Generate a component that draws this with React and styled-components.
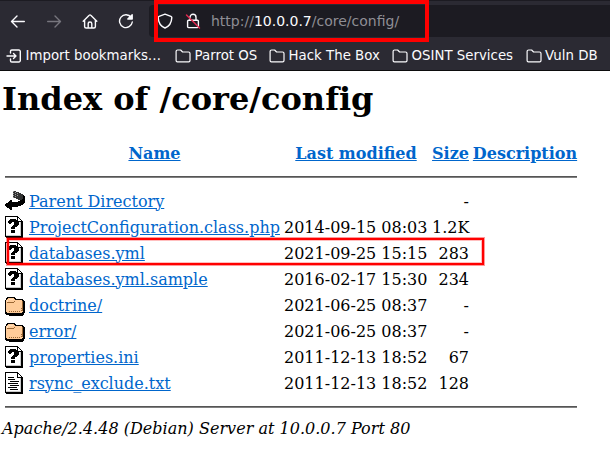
import React from "react";
import styled, { createGlobalStyle } from "styled-components";

const GlobalStyle = createGlobalStyle`
  * { box-sizing: border-box; }
  body { margin: 0; background: #fff; overflow: hidden; }
`;

const Window = styled.div`
  width: 610px;
  height: 467px;
  position: relative;
  overflow: hidden;
`;

const Chrome = styled.header`
  height: 71px;
  background: #2b2a33;
  border-top: 1px solid #1c1b22;
  border-bottom: 1px solid #0c0c0d;
  font-family: "DejaVu Sans", sans-serif;
  color: #fbfbfe;
`;

const NavBar = styled.div`
  display: flex;
  height: 41px;
  padding-top: 4px;
`;

const NavButtons = styled.div`
  display: flex;
  align-items: center;
  width: 149px;
  height: 32px;
  padding-left: 10px;
  gap: 20px;
`;

const Glyph = styled.svg`
  display: block;
  flex: none;
  fill: none;
  stroke: ${(p) => p.$color || "#fbfbfe"};
  stroke-width: ${(p) => p.$weight || 1.4};
  stroke-linecap: round;
  stroke-linejoin: round;
`;

const UrlBar = styled.div`
  display: flex;
  align-items: center;
  flex: 1;
  height: 32px;
  padding-left: 8px;
  gap: 12px;
  background: #1c1b22;
  border-radius: 4px 0 0 4px;
`;

const Url = styled.span`
  font-size: 14px;
  line-height: 20px;
  margin-left: -2px;
  color: #8f8e95;
  white-space: nowrap;
`;

const Host = styled.span`
  color: #fbfbfe;
`;

const BookmarksBar = styled.nav`
  display: flex;
  align-items: center;
  height: 28px;
  padding-left: 6px;
`;

const Bookmark = styled.span`
  display: flex;
  align-items: center;
  flex: none;
  gap: 3.6px;
  width: ${(p) => p.$width}px;
  font-size: 13.33px;
  line-height: 18px;
  white-space: nowrap;
`;

const Page = styled.main`
  padding: 9px 0 0 2px;
  font-family: "DejaVu Serif", serif;
  font-size: 16px;
  line-height: 19px;
  color: #000;
`;

const Title = styled.h1`
  margin: 0;
  font-size: 32px;
  line-height: 38px;
  letter-spacing: 0.01px;
  white-space: nowrap;
`;

const Listing = styled.div`
  width: 572px;
  margin: 22px 0 0 3px;
`;

const Row = styled.div`
  display: grid;
  grid-template-columns: 20px 251px 144px 37px 104px;
  column-gap: 4px;
  align-items: center;
  height: 26px;
  white-space: nowrap;
`;

const HeadRow = styled(Row)`
  height: 27px;
  font-weight: bold;
  justify-items: center;
`;

const Rule = styled.hr`
  height: 2px;
  margin: ${(p) => (p.$closing ? "10px 0 11px" : "9px 0 10px")};
  border: 0;
  background: #808080;
  border-top: 1px solid #555;
`;

const Link = styled.a`
  color: #0066cc;
  text-decoration: underline;
`;

const Size = styled.span`
  text-align: right;
  white-space: pre;
`;

const Footer = styled.address`
  font-style: italic;
  letter-spacing: 0.02px;
`;

const AddressMark = styled.div`
  position: absolute;
  left: 154px;
  top: 0;
  width: 275px;
  height: 42px;
  border: 4px solid #f00;
`;

const RowMark = styled.div`
  position: absolute;
  left: 7px;
  top: 238px;
  width: 477px;
  height: 27px;
  border: 2px solid #f00;
  box-shadow: 0 0 0 1px rgba(255, 0, 0, 0.4), inset 0 0 0 1px rgba(255, 0, 0, 0.25);
`;

const PixelSvg = styled.svg`
  display: block;
  shape-rendering: crispEdges;
`;

const FolderGlyph = () => (
  <Glyph width="16" height="16" viewBox="0 0 16 16" $weight={1.2}>
    <path d="M1.1 3.5a1.5 1.5 0 0 1 1.5-1.5h3l2 2h5.9a1.5 1.5 0 0 1 1.5 1.5v7a1.3 1.3 0 0 1-1.3 1.3H2.4a1.3 1.3 0 0 1-1.3-1.3z" />
  </Glyph>
);

const ImportGlyph = () => (
  <Glyph width="16" height="16" viewBox="0 0 16 16">
    <path d="M4.5 5V3.3a1.3 1.3 0 0 1 1.3-1.3h7a1.5 1.5 0 0 1 1.5 1.5v9a1.5 1.5 0 0 1-1.5 1.5h-7a1.3 1.3 0 0 1-1.3-1.3V11M1 8h9M7.5 5.5 10 8l-2.5 2.5" />
  </Glyph>
);

const Sheet = ({ children }) => (
  <PixelSvg width="20" height="22" viewBox="0 0 20 22">
    <path fill="#000" d="M0 0h13v1h1v1h1v1h1v1h1v1h1v17H1v-1H0z" />
    <path fill="#fff" d="M1 1h11v5h4v14H1z" />
    <path fill="#ccc" d="M15 6h1v14H1v-1h14z" />
    <path fill="#fff" d="M13 2h1v1h1v1h1v1h-3z" />
    {children}
  </PixelSvg>
);

const UnknownIcon = () => (
  <Sheet>
    <path fill="#000" d="M5 3h6v1h2v2h1v3h-1v1h-1v1h-2v2H6v-2h1v-1h1V9h1V6H7v1H6v1H4V7H3V5h1V4h1zM6 14h4v3H6z" />
  </Sheet>
);

const TextIcon = () => (
  <Sheet>
    <path fill="#000" d="M3 5h6v1H3zM3 7h7v1H3zM5 9h9v1H5zM3 11h10v1H3zM5 13h9v1H5zM3 15h9v1H3zM5 17h8v1H5z" />
  </Sheet>
);

const FolderIcon = () => (
  <PixelSvg width="20" height="22" viewBox="0 -1 20 22">
    <path fill="#000" d="M2 2h8v1h1v1h7v1h1v1h1v12h-1v2h-1v1H4v-1H1v-1H0V5h1V3h1z" />
    <path fill="#ffcc99" d="M2 4h1V3h6v1h1v1h7v1h1v11h-1v1H2v-1H1V5h1z" />
    <path fill="#996633" d="M2 7h7v1H2zM9 6h1v1H9zM17 6h1v10h-1zM4 16h1v1H4zM6 16h1v1H6zM8 16h1v1H8zM10 16h1v1h-1zM12 16h1v1h-1zM14 16h1v1h-1zM16 15h1v1h-1zM16 13h1v1h-1z" />
    <path fill="#ffe0c0" d="M2 5h1v2H2zM4 4h4v1H4z" />
  </PixelSvg>
);

const BackIcon = () => (
  <PixelSvg width="20" height="22" viewBox="0 0 20 22">
    <path fill="#333" d="M8 1h3v1h3v1h2v1h2v2h1v3h-2v1h-4V9h-2V8H8z" />
    <path fill="#999" d="M8 1h1v1H8zM10 2h1v1h-1zM8 3h1v1H8zM10 4h1v1h-1zM12 3h1v1h-1zM8 5h1v1H8zM10 6h1v1h-1zM8 7h1v1H8zM12 5h1v1h-1z" />
    <path fill="#000" d="M18 5h1v1h1v7h-1v1h-1v1h-2v1h-3v1H7v3H5v-1H4v-1H2v-1H1v-1H0v-2h1v-1h2v-1h1v-1h1v-1h2v2h6v-1h2v-1h2V9h1z" />
  </PixelSvg>
);

const icons = { back: BackIcon, unknown: UnknownIcon, folder: FolderIcon, text: TextIcon };

const entries = [
  ["back", "Parent Directory", "", "-"],
  ["unknown", "ProjectConfiguration.class.php", "2014-09-15 08:03", "1.2K"],
  ["unknown", "databases.yml", "2021-09-25 15:15", "283"],
  ["unknown", "databases.yml.sample", "2016-02-17 15:30", "234"],
  ["folder", "doctrine/", "2021-06-25 08:37", "-"],
  ["folder", "error/", "2021-06-25 08:37", "-"],
  ["unknown", "properties.ini", "2011-12-13 18:52", "67"],
  ["text", "rsync_exclude.txt", "2011-12-13 18:52", "128"],
];

const bookmarks = [
  ["Parrot OS", 94],
  ["Hack The Box", 123],
  ["OSINT Services", 133.5],
  ["Vuln DB", 90],
];

export default function App() {
  return (
    <Window>
      <GlobalStyle />
      <Chrome>
        <NavBar>
          <NavButtons>
            <Glyph width="16" height="16" viewBox="0 0 16 16">
              <path d="M14.3 8.5H1.5M7 3 1.5 8.5 7 14" />
            </Glyph>
            <Glyph width="16" height="16" viewBox="0 0 16 16" $color="#77767e">
              <path d="M1.7 8.5h12.8M9 3l5.5 5.5L9 14" />
            </Glyph>
            <Glyph width="16" height="16" viewBox="0 0 16 16">
              <path d="m1.2 8.2 6-6a1.1 1.1 0 0 1 1.6 0l6 6M2.6 7v6.5a1.5 1.5 0 0 0 1.5 1.5h7.8a1.5 1.5 0 0 0 1.5-1.5V7M6.2 15v-4.2a1.8 1.8 0 0 1 3.6 0V15" />
            </Glyph>
            <Glyph width="16" height="16" viewBox="0 0 16 16">
              <path d="M13.2 4.5A6.4 6.4 0 1 0 14.3 9" />
              <path d="M14.2 1.8v4.3H9.8z" fill="#fbfbfe" />
            </Glyph>
          </NavButtons>
          <UrlBar>
            <Glyph width="16" height="16" viewBox="0 0 16 16">
              <path d="M8 1.2 13.9 3.4c.7.3.9.6.9 1.2C14.6 10 12 13.3 8 15 4 13.3 1.4 10 1.2 4.6c0-.6.2-.9.9-1.2z" />
            </Glyph>
            <Glyph width="16" height="16" viewBox="0 0 16 16">
              <path d="M5 7V4.3a3 3 0 0 1 6 0V7M3.6 7.2h8.8a1 1 0 0 1 1 1v5.4a1 1 0 0 1-1 1H3.6a1 1 0 0 1-1-1V8.2a1 1 0 0 1 1-1z" />
              <path d="m1.5 2 13 13" stroke="#e22850" />
            </Glyph>
            <Url>http://<Host>10.0.0.7</Host>/core/config/</Url>
          </UrlBar>
        </NavBar>
        <BookmarksBar>
          <Bookmark $width={169}>
            <ImportGlyph />
            Import bookmarks…
          </Bookmark>
          {bookmarks.map(([name, width]) => (
            <Bookmark key={name} $width={width}>
              <FolderGlyph />
              {name}
            </Bookmark>
          ))}
        </BookmarksBar>
      </Chrome>
      <Page>
        <Title>Index of /core/config</Title>
        <Listing>
          <HeadRow>
            <span />
            <Link>Name</Link>
            <Link>Last modified</Link>
            <Link>Size</Link>
            <Link>Description</Link>
          </HeadRow>
          <Rule />
          {entries.map(([kind, name, date, size]) => {
            const Icon = icons[kind];
            return (
              <Row key={name}>
                <Icon />
                <Link>{name}</Link>
                <span>{date}</span>
                <Size>{size}</Size>
                <span />
              </Row>
            );
          })}
          <Rule $closing />
        </Listing>
        <Footer>Apache/2.4.48 (Debian) Server at 10.0.0.7 Port 80</Footer>
      </Page>
      <AddressMark />
      <RowMark />
    </Window>
  );
}
